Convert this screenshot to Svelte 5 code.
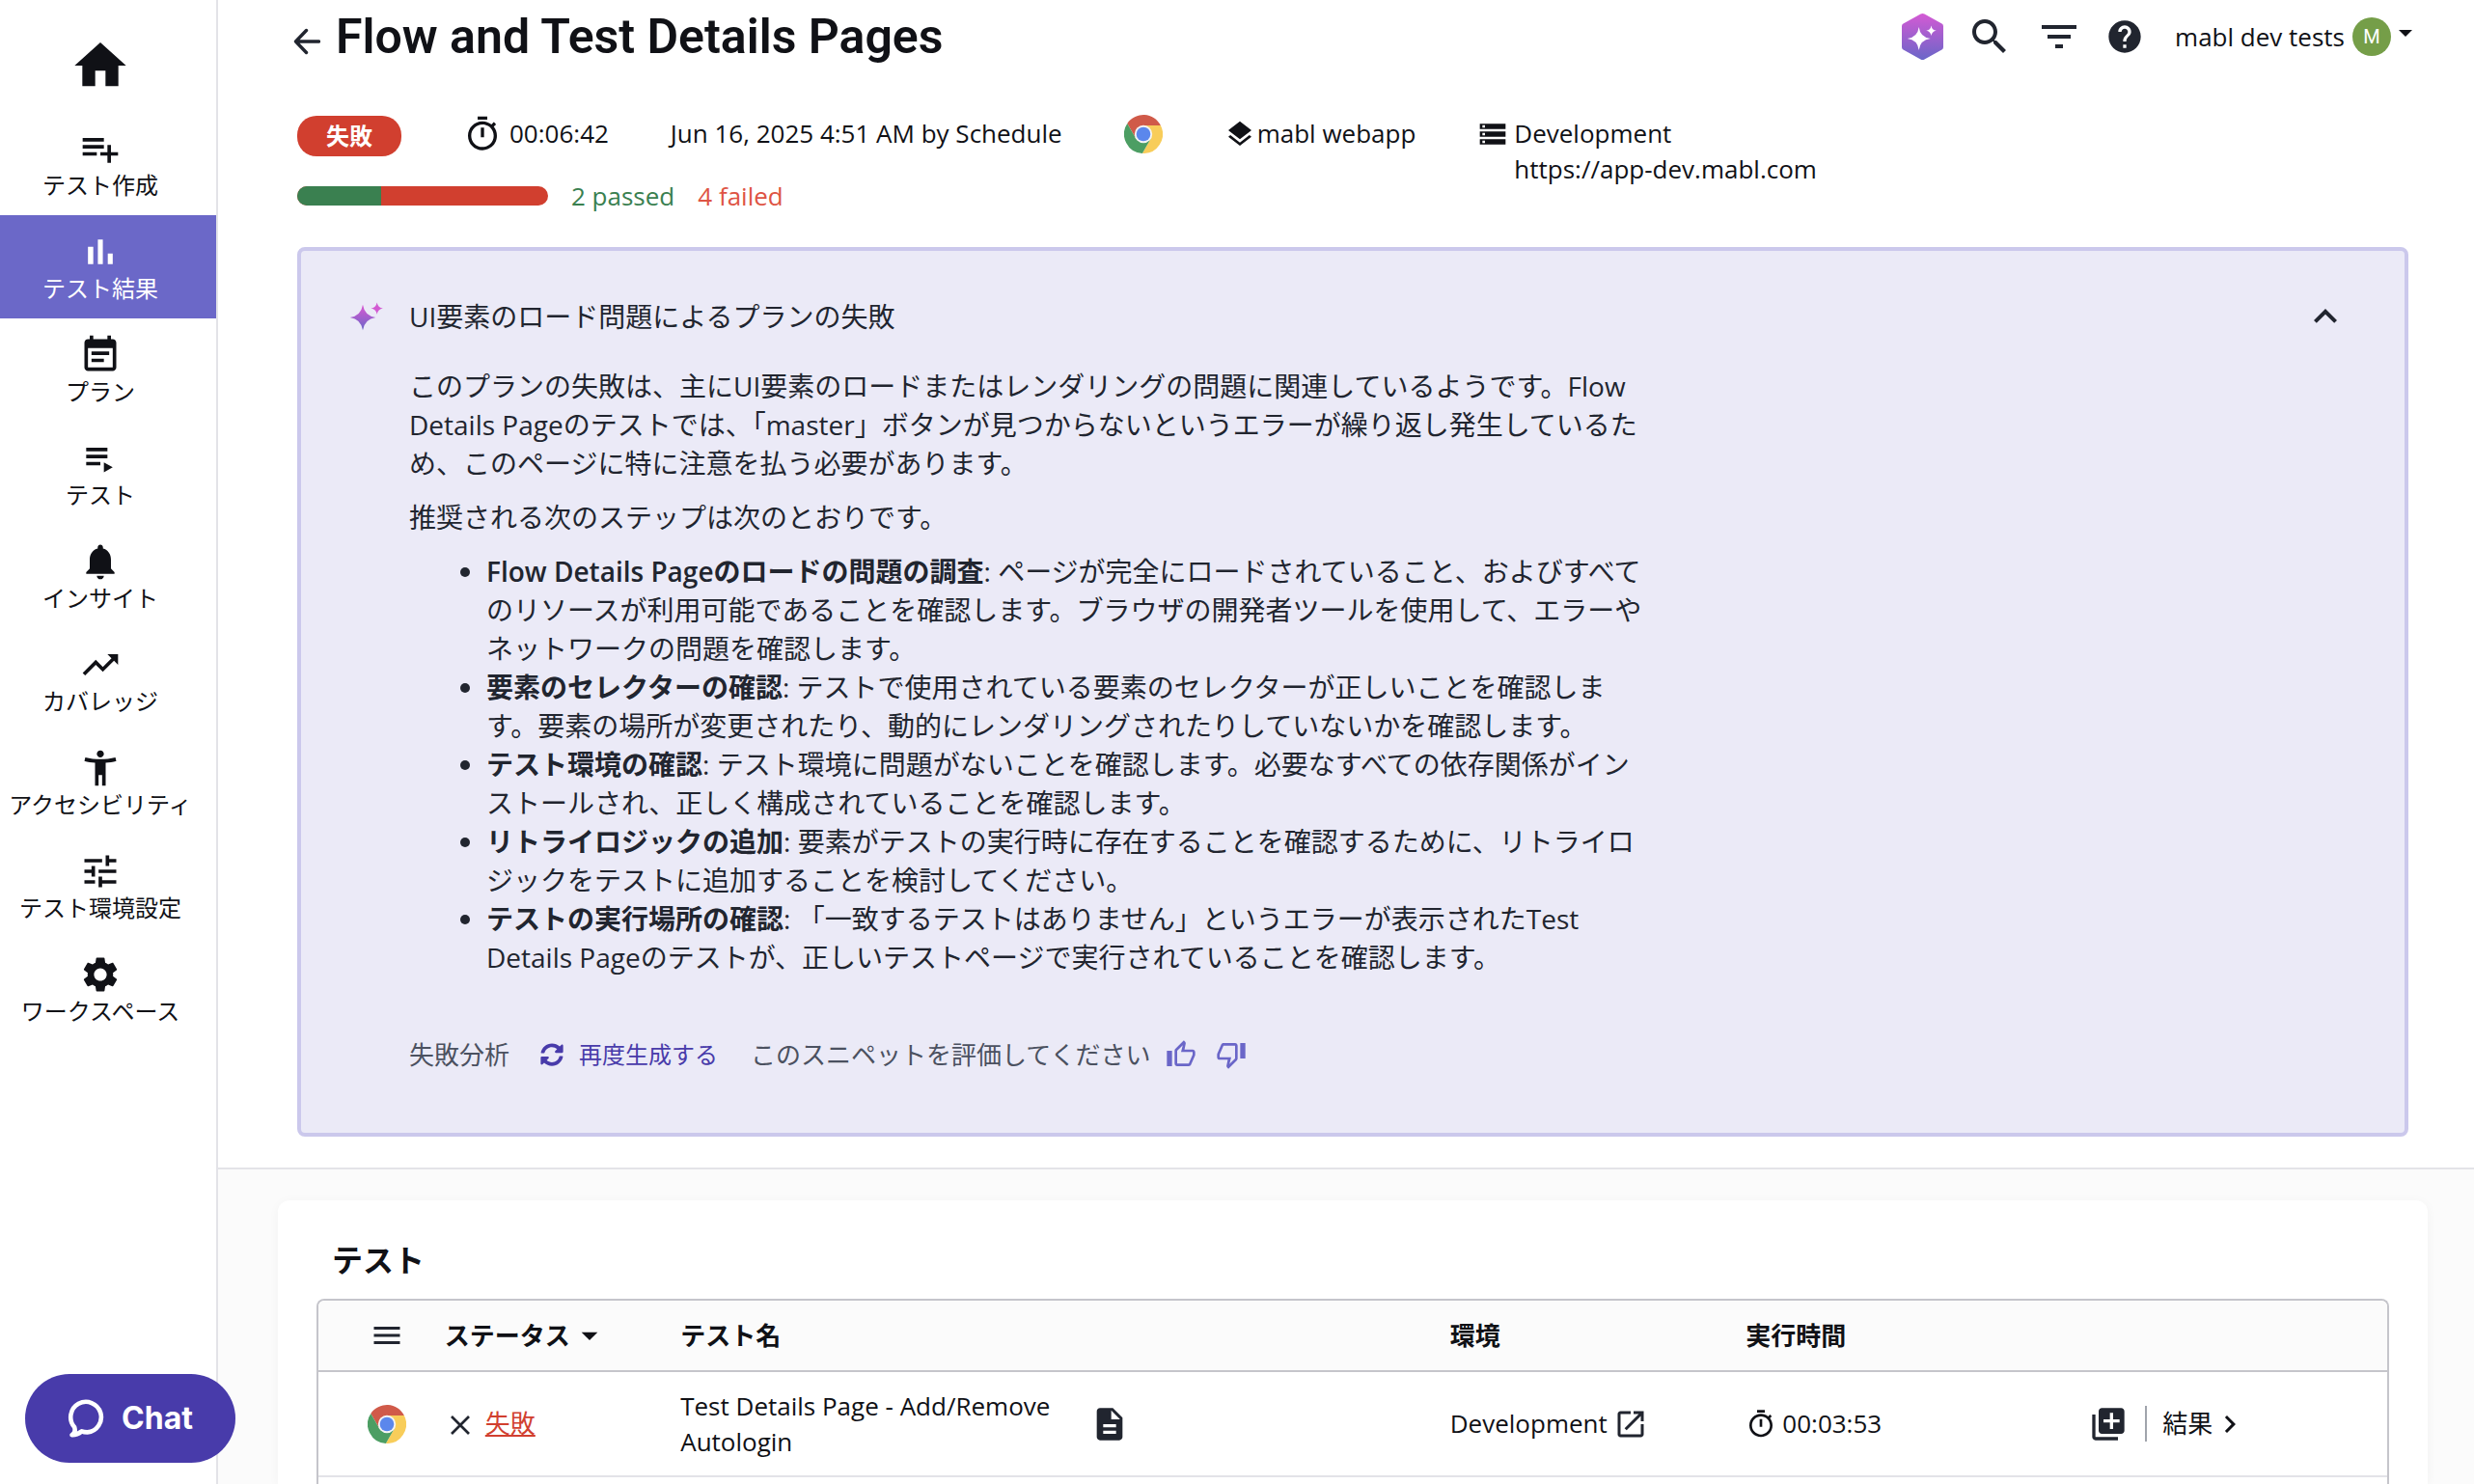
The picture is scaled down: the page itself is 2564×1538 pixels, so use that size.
<script>
  const navItems = [
    { label: 'テスト作成', icon: 'M14 10H2v2h12v-2zm0-4H2v2h12V6zm4 8v-4h-2v4h-4v2h4v4h2v-4h4v-2h-4zM2 16h8v-2H2v2z' },
    { label: 'テスト結果', active: true, icon: 'M5 9.2h3V19H5zM10.6 5h2.8v14h-2.8zm5.6 8H19v6h-2.8z' },
    { label: 'プラン', icon: 'M17 10H7v2h10v-2zm2-7h-1V1h-2v2H8V1H6v2H5c-1.11 0-1.99.9-1.99 2L3 19c0 1.1.89 2 2 2h14c1.1 0 2-.9 2-2V5c0-1.1-.9-2-2-2zm0 16H5V8h14v11zm-5-5H7v2h7v-2z' },
    { label: 'テスト', icon: 'M4 6h12v2H4zM4 10h12v2H4zM4 14h8v2H4zM14 14.3v5.6l5-2.8z' },
    { label: 'インサイト', icon: 'M12 22c1.1 0 2-.9 2-2h-4c0 1.1.89 2 2 2zm6-6v-5c0-3.07-1.64-5.64-4.5-6.32V4c0-.83-.67-1.5-1.5-1.5s-1.5.67-1.5 1.5v.68C7.63 5.36 6 7.92 6 11v5l-2 2v1h16v-1l-2-2z' },
    { label: 'カバレッジ', icon: 'M16 6l2.29 2.29-4.88 4.88-4-4L2 16.59 3.41 18l6-6 4 4 6.3-6.29L22 12V6z' },
    { label: 'アクセシビリティ', icon: 'M20.5 6c-2.61.7-5.67 1-8.5 1s-5.89-.3-8.5-1L3 8c1.86.5 4 .83 6 1v13h2v-6h2v6h2V9c2-.17 4.14-.5 6-1l-.5-2zM12 6c1.1 0 2-.9 2-2s-.9-2-2-2-2 .9-2 2 .9 2 2 2z' },
    { label: 'テスト環境設定', icon: 'M3 17v2h6v-2H3zM3 5v2h10V5H3zm10 16v-2h8v-2h-8v-2h-2v6h2zM7 9v2H3v2h4v2h2V9H7zm14 4v-2H11v2h10zm-6-4h2V7h4V5h-4V3h-2v6z' },
    { label: 'ワークスペース', icon: 'M19.14 12.94c.04-.3.06-.61.06-.94 0-.32-.02-.64-.07-.94l2.03-1.58c.18-.14.23-.41.12-.61l-1.92-3.32c-.12-.22-.37-.29-.59-.22l-2.39.96c-.5-.38-1.03-.7-1.62-.94l-.36-2.54c-.04-.24-.24-.41-.48-.41h-3.84c-.24 0-.43.17-.47.41l-.36 2.54c-.59.24-1.13.57-1.62.94l-2.39-.96c-.22-.08-.47 0-.59.22L2.74 8.87c-.12.21-.08.47.12.61l2.03 1.58c-.05.3-.09.63-.09.94s.02.64.07.94l-2.03 1.58c-.18.14-.23.41-.12.61l1.92 3.32c.12.22.37.29.59.22l2.39-.96c.5.38 1.03.7 1.62.94l.36 2.54c.05.24.24.41.48.41h3.84c.24 0 .44-.17.47-.41l.36-2.54c.59-.24 1.13-.56 1.62-.94l2.39.96c.22.08.47 0 .59-.22l1.92-3.32c.12-.22.07-.47-.12-.61l-2.01-1.58zM12 15.6c-1.98 0-3.6-1.62-3.6-3.6s1.62-3.6 3.6-3.6 3.6 1.62 3.6 3.6-1.62 3.6-3.6 3.6z' }
  ]

  const icons = {
    home: 'M10 20v-6h4v6h5v-8h3L12 3 2 12h3v8z',
    search: 'M15.5 14h-.79l-.28-.27C15.41 12.59 16 11.11 16 9.5 16 5.91 13.09 3 9.5 3S3 5.91 3 9.5 5.91 16 9.5 16c1.61 0 3.09-.59 4.23-1.57l.27.28v.79l5 4.99L20.49 19l-4.99-5zm-6 0C7.01 14 5 11.99 5 9.5S7.01 5 9.5 5 14 7.01 14 9.5 11.99 14 9.5 14z',
    filter: 'M10 18h4v-2h-4v2zM3 6v2h18V6H3zm3 7h12v-2H6v2z',
    help: 'M12 2C6.48 2 2 6.48 2 12s4.48 10 10 10 10-4.48 10-10S17.52 2 12 2zm1 17h-2v-2h2v2zm2.07-7.75l-.9.92C13.45 12.9 13 13.5 13 15h-2v-.5c0-1.1.45-2.1 1.17-2.83l1.24-1.26c.37-.36.59-.86.59-1.41 0-1.1-.9-2-2-2s-2 .9-2 2H8c0-2.21 1.79-4 4-4s4 1.79 4 4c0 .88-.36 1.68-.93 2.25z',
    timer: 'M15 1H9v2h6V1zm-4 13h2V8h-2v6zm8.03-6.61l1.42-1.42c-.43-.51-.9-.99-1.41-1.41l-1.42 1.42C16.07 4.74 14.12 4 12 4c-4.97 0-9 4.03-9 9s4.02 9 9 9 9-4.03 9-9c0-2.12-.74-4.07-1.97-5.61zM12 20c-3.87 0-7-3.13-7-7s3.13-7 7-7 7 3.13 7 7-3.13 7-7 7z',
    layers: 'M11.99 18.54l-7.37-5.73L3 14.07l9 7 9-7-1.63-1.27-7.38 5.74zM12 16l7.36-5.73L21 9l-9-7-9 7 1.63 1.27L12 16z',
    storage: 'M2 20h20v-4H2v4zm2-3h2v2H4v-2zM2 4v4h20V4H2zm4 3H4V5h2v2zm-4 7h20v-4H2v4zm2-3h2v2H4v-2z',
    up: 'M12 8l-6 6 1.41 1.41L12 10.83l4.59 4.58L18 14z',
    right: 'M10 6L8.59 7.41 13.17 12l-4.58 4.59L10 18l6-6z',
    thumbUp: 'M9 21h9c.83 0 1.54-.5 1.84-1.22l3.02-7.05c.09-.23.14-.47.14-.73v-2c0-1.1-.9-2-2-2h-6.31l.95-4.57.03-.32c0-.41-.17-.79-.44-1.06L14.17 1 7.58 7.59C7.22 7.95 7 8.45 7 9v10c0 1.1.9 2 2 2zM9 9l4.34-4.34L12 10h9v2l-3 7H9V9zM1 9h4v12H1z',
    thumbDown: 'M15 3H6c-.83 0-1.54.5-1.84 1.22l-3.02 7.05c-.09.23-.14.47-.14.73v2c0 1.1.9 2 2 2h6.31l-.95 4.57-.03.32c0 .41.17.79.44 1.06L9.83 23l6.59-6.59c.36-.36.58-.86.58-1.41V5c0-1.1-.9-2-2-2zm0 12l-4.34 4.34L12 14H3v-2l3-7h9v10zm4-12h4v12h-4z',
    menu: 'M3 18h18v-2H3v2zm0-5h18v-2H3v2zm0-7v2h18V6H3z',
    dropDown: 'M7 10l5 5 5-5z',
    doc: 'M14 2H6c-1.1 0-1.99.9-1.99 2L4 20c0 1.1.89 2 1.99 2H18c1.1 0 2-.9 2-2V8l-6-6zm2 16H8v-2h8v2zm0-4H8v-2h8v2zm-3-5V3.5L18.5 9H13z',
    open: 'M19 19H5V5h7V3H5c-1.11 0-2 .9-2 2v14c0 1.1.89 2 2 2h14c1.1 0 2-.9 2-2v-7h-2v7zM14 3v2h3.59l-9.83 9.83 1.41 1.41L19 6.41V10h2V3h-7z',
    copyAdd: 'M4 6H2v14c0 1.1.9 2 2 2h14v-2H4V6zm16-4H8c-1.1 0-2 .9-2 2v12c0 1.1.9 2 2 2h12c1.1 0 2-.9 2-2V4c0-1.1-.9-2-2-2zm-1 9h-4v4h-2v-4H9V9h4V5h2v4h4v2z'
  }

  const steps = [
    { title: 'Flow Details Pageのロードの問題の調査', text: 'ページが完全にロードされていること、およびすべてのリソースが利用可能であることを確認します。ブラウザの開発者ツールを使用して、エラーやネットワークの問題を確認します。' },
    { title: '要素のセレクターの確認', text: 'テストで使用されている要素のセレクターが正しいことを確認します。要素の場所が変更されたり、動的にレンダリングされたりしていないかを確認します。' },
    { title: 'テスト環境の確認', text: 'テスト環境に問題がないことを確認します。必要なすべての依存関係がインストールされ、正しく構成されていることを確認します。' },
    { title: 'リトライロジックの追加', text: '要素がテストの実行時に存在することを確認するために、リトライロジックをテストに追加することを検討してください。' },
    { title: 'テストの実行場所の確認', text: '「一致するテストはありません」というエラーが表示されたTest Details Pageのテストが、正しいテストページで実行されていることを確認します。' }
  ]

  const passed = 2
  const failed = 4

  let open = $state(true)
</script>

{#snippet icon(d, size)}
  <svg width={size} height={size} viewBox="0 0 24 24" aria-hidden="true"><path {d} fill="currentColor" /></svg>
{/snippet}

{#snippet chrome()}
  <svg width="40" height="40" viewBox="0 0 40 40" role="img" aria-label="Chrome">
    <path fill="#d05a49" d="M3.28 9.03A20 20 0 0 1 37.86 11L20 11 12.21 24.5z" />
    <path fill="#f8cd5a" d="M37.86 11A20 20 0 0 1 18.86 39.97L27.79 24.5 20 11z" />
    <path fill="#4c9e63" d="M18.86 39.97A20 20 0 0 1 3.28 9.03L12.21 24.5 27.79 24.5z" />
    <circle cx="20" cy="20" r="9.2" fill="#f4f4f4" />
    <circle cx="20" cy="20" r="7.3" fill="#5b87ec" />
  </svg>
{/snippet}

<div class="app">
  <aside class="sidebar">
    <a class="home" href="#home" aria-label="Home">{@render icon(icons.home, 64)}</a>
    <nav>
      {#each navItems as item}
        <a class="nav-item" class:active={item.active} href="#nav">
          {@render icon(item.icon, 44)}
          <span>{item.label}</span>
        </a>
      {/each}
    </nav>
    <button class="chat">
      <svg width="40" height="40" viewBox="0 0 40 40" aria-hidden="true">
        <path d="M4.5 37.2c3-1.6 3.8-4.6 2.6-8.2A15.8 15.8 0 1 1 20.5 34.4c-2.4 0-4.2-.3-5.8-1-3.2 2.6-6.6 4-10.2 3.8z" fill="none" stroke="currentColor" stroke-width="4.6" stroke-linejoin="round" />
      </svg>
      Chat
    </button>
  </aside>

  <main>
    <header class="overview">
      <div class="topbar">
        <button class="back" aria-label="Back">
          <svg width="28" height="38" viewBox="0 0 28 38"><path d="M26.5 24H3M13.5 12.5L2.5 24l11 11.5" fill="none" stroke="currentColor" stroke-width="3.4" stroke-linecap="round" stroke-linejoin="round" /></svg>
        </button>
        <h1>Flow and Test Details Pages</h1>
        <div class="tools">
          <button aria-label="AI">
            <svg width="43" height="48" viewBox="0 0 43 48">
              <defs>
                <linearGradient id="hex" x1="0" y1="0" x2="0" y2="1">
                  <stop offset="0" stop-color="#d45ad4" />
                  <stop offset="1" stop-color="#6a66c8" />
                </linearGradient>
              </defs>
              <path d="M19.5.6q2-1.1 4 0L41.5 10.4q1.5.9 1.5 2.6v22q0 1.7-1.5 2.6L23.5 47.4q-2 1.1-4 0L1.5 37.6Q0 36.7 0 35V13q0-1.7 1.5-2.6z" fill="url(#hex)" />
              <path d="M17.7 14q1.3 10.7 12 12-10.7 1.3-12 12-1.3-10.7-12-12 10.7-1.3 12-12zM30.5 12.4q.7 4.6 5.3 5.3-4.6.7-5.3 5.3-.7-4.6-5.3-5.3 4.6-.7 5.3-5.3z" fill="#fff" />
            </svg>
          </button>
          <button aria-label="Search">{@render icon(icons.search, 48)}</button>
          <button aria-label="Filter">{@render icon(icons.filter, 48)}</button>
          <button aria-label="Help">{@render icon(icons.help, 40)}</button>
          <button class="account">
            mabl dev tests
            <span class="avatar">M</span>
            <svg width="14" height="14" viewBox="0 0 14 14"><path d="M0 0h14L7 7z" fill="currentColor" /></svg>
          </button>
        </div>
      </div>

      <div class="summary">
        <div class="run">
          <div class="facts">
            <span class="badge">失敗</span>
            <span class="fact wide">{@render icon(icons.timer, 40)}00:06:42</span>
            <span class="fact">Jun 16, 2025 4:51 AM by Schedule</span>
            <span class="fact">{@render chrome()}</span>
            <span class="fact">{@render icon(icons.layers, 32)}mabl webapp</span>
          </div>
          <div class="progress">
            <div class="bar"><div class="bar-passed" style="width: {100 * passed / (passed + failed)}%"></div></div>
            <span class="passed">{passed} passed</span>
            <span class="failed">{failed} failed</span>
          </div>
        </div>
        <div class="env">
          {@render icon(icons.storage, 32)}
          <div>Development<br />https://app-dev.mabl.com</div>
        </div>
      </div>

      <section class="analysis">
        <div class="analysis-head">
          <svg width="40" height="40" viewBox="0 0 40 40" aria-hidden="true">
            <defs>
              <linearGradient id="spark" x1="0" y1="0" x2="0" y2="1">
                <stop offset="0" stop-color="#dc58d2" />
                <stop offset="1" stop-color="#6a66c8" />
              </linearGradient>
            </defs>
            <path d="M16 7.7q1.8 11.5 13.3 13.3-11.5 1.8-13.3 13.3-1.8-11.5-13.3-13.3 11.5-1.8 13.3-13.3z" fill="url(#spark)" />
            <path d="M30.7 5.4q1 5.2 6.2 6.2-5.2 1-6.2 6.2-1-5.2-6.2-6.2 5.2-1 6.2-6.2z" fill="#d25ad2" />
          </svg>
          <h2>UI要素のロード問題によるプランの失敗</h2>
          <button aria-label="Toggle" aria-expanded={open} onclick={() => (open = !open)}>{@render icon(icons.up, 48)}</button>
        </div>
        {#if open}
          <div class="analysis-body">
            <p>このプランの失敗は、主にUI要素のロードまたはレンダリングの問題に関連しているようです。Flow Details Pageのテストでは、「master」ボタンが見つからないというエラーが繰り返し発生しているため、このページに特に注意を払う必要があります。</p>
            <p>推奨される次のステップは次のとおりです。</p>
            <ul>
              {#each steps as step}
                <li><strong>{step.title}</strong>: {step.text}</li>
              {/each}
            </ul>
          </div>
          <div class="analysis-foot">
            <span>失敗分析</span>
            <button class="regenerate">
              <svg width="24" height="24" viewBox="0 0 512 512" aria-hidden="true"><path fill="currentColor" d="M370.72 133.28C339.458 104.008 298.888 87.962 255.848 88c-77.458.068-144.328 53.178-162.791 126.85-1.344 5.363-6.122 9.15-11.651 9.15H24.103c-7.498 0-13.194-6.807-11.807-14.176C33.933 94.924 134.813 8 256 8c66.448 0 126.791 26.136 171.315 68.685L463.03 40.97C478.149 25.851 504 36.559 504 57.941V192c0 13.255-10.745 24-24 24H345.941c-21.382 0-32.09-25.851-16.971-40.971l41.75-41.749zM32 296h134.059c21.382 0 32.09 25.851 16.971 40.971l-41.75 41.75c31.262 29.273 71.835 45.319 114.876 45.28 77.418-.07 144.315-53.144 162.787-126.849 1.344-5.363 6.122-9.15 11.651-9.15h57.304c7.498 0 13.194 6.807 11.807 14.176C478.067 417.076 377.187 504 256 504c-66.448 0-126.791-26.136-171.315-68.685L48.97 471.03C33.851 486.149 8 475.441 8 454.059V320c0-13.255 10.745-24 24-24z" /></svg>
              再度生成する
            </button>
            <span>このスニペットを評価してください</span>
            <div class="votes">
              <button aria-label="Good">{@render icon(icons.thumbUp, 32)}</button>
              <button aria-label="Bad">{@render icon(icons.thumbDown, 32)}</button>
            </div>
          </div>
        {/if}
      </section>
    </header>

    <div class="results">
      <section class="card">
        <h3>テスト</h3>
        <div class="table-wrap">
          <table>
            <colgroup>
              <col class="c-browser" /><col class="c-status" /><col class="c-name" /><col class="c-doc" /><col class="c-env" /><col class="c-time" /><col />
            </colgroup>
            <thead>
              <tr>
                <th class="center"><button aria-label="Columns">{@render icon(icons.menu, 36)}</button></th>
                <th><button class="sort">ステータス{@render icon(icons.dropDown, 40)}</button></th>
                <th>テスト名</th>
                <th></th>
                <th>環境</th>
                <th>実行時間</th>
                <th></th>
              </tr>
            </thead>
            <tbody>
              <tr>
                <td class="center">{@render chrome()}</td>
                <td>
                  <div class="cell status">
                    <svg width="28" height="28" viewBox="0 0 28 28" aria-hidden="true"><path d="M5 6l18 18M23 6L5 24" stroke="currentColor" stroke-width="2.7" /></svg>
                    <a class="fail-link" href="#failure">失敗</a>
                  </div>
                </td>
                <td>Test Details Page - Add/Remove Autologin</td>
                <td><button aria-label="Logs">{@render icon(icons.doc, 40)}</button></td>
                <td><div class="cell">Development <button aria-label="Open">{@render icon(icons.open, 36)}</button></div></td>
                <td><div class="cell">{@render icon(icons.timer, 32)}00:03:53</div></td>
                <td>
                  <div class="cell">
                    <button aria-label="Add">{@render icon(icons.copyAdd, 40)}</button>
                    <a class="result-link" href="#result">結果{@render icon(icons.right, 36)}</a>
                  </div>
                </td>
              </tr>
            </tbody>
          </table>
        </div>
      </section>
    </div>
  </main>
</div>

<style>
  :global(body) {
    margin: 0;
  }

  .app {
    display: flex;
    height: 100vh;
    overflow: hidden;
    background: #fff;
    color: #101116;
    font: 26px/37px 'Open Sans', 'Noto Sans CJK JP', sans-serif;
  }

  svg {
    display: block;
    flex: none;
  }

  button {
    display: block;
    margin: 0;
    padding: 0;
    border: 0;
    background: none;
    color: #21252f;
    font: inherit;
    cursor: pointer;
  }

  a {
    color: inherit;
    text-decoration: none;
  }

  h1, h2, h3, p, ul {
    margin: 0;
  }

  .sidebar {
    flex: none;
    width: 224px;
    border-right: 2px solid #e3e3e8;
  }

  .home {
    display: flex;
    justify-content: center;
    padding: 36px 16px 16px 0;
  }

  .nav-item {
    display: flex;
    flex-direction: column;
    align-items: center;
    padding: 16px 16px 16px 0;
    font-size: 24px;
    line-height: 31px;
    white-space: nowrap;
  }

  .nav-item.active {
    background: #6b68c8;
    color: #fff;
  }

  /* floats over the sidebar edge */
  .chat {
    position: fixed;
    left: 26px;
    bottom: 22px;
    display: flex;
    align-items: center;
    justify-content: center;
    gap: 16px;
    width: 218px;
    height: 92px;
    border-radius: 46px;
    background: #483baa;
    color: #fff;
    font: 700 32px/40px Inter, sans-serif;
  }

  main {
    flex: 1;
    min-width: 0;
    display: flex;
    flex-direction: column;
  }

  .overview {
    padding: 0 68px 32px 82px;
    border-bottom: 2px solid #e3e3e8;
  }

  .topbar {
    display: flex;
    align-items: center;
    height: 76px;
    margin: 0 -4px;
  }

  h1 {
    margin-left: 16px;
    font: 600 50px/60px Roboto, sans-serif;
  }

  .tools {
    display: flex;
    align-items: center;
    gap: 24px;
    margin-left: auto;
  }

  .account {
    display: flex;
    align-items: center;
    gap: 8px;
    margin-left: 8px;
    color: #101116;
  }

  .avatar {
    width: 40px;
    border-radius: 50%;
    background: #759e48;
    color: #fff;
    font: 20px/40px Roboto, sans-serif;
  }

  .summary {
    display: flex;
    gap: 64px;
    margin-top: 44px;
  }

  .facts {
    display: flex;
    align-items: flex-start;
    gap: 64px;
  }

  .badge {
    width: 108px;
    border-radius: 20px;
    background: #d13f2f;
    color: #fff;
    font-size: 24px;
    font-weight: 700;
    line-height: 42px;
    text-align: center;
  }

  .fact {
    display: flex;
    align-items: center;
    gap: 2px;
    height: 37px;
  }

  .fact.wide {
    gap: 8px;
  }

  .progress {
    display: flex;
    align-items: center;
    gap: 24px;
    height: 20px;
    margin-top: 31px;
    font-weight: 500;
  }

  .bar {
    width: 260px;
    height: 20px;
    overflow: hidden;
    border-radius: 10px;
    background: #d13f2f;
  }

  .bar-passed {
    height: 100%;
    background: #3a8050;
  }

  .passed {
    color: #3a8050;
  }

  .failed {
    color: #de5444;
  }

  .env {
    display: flex;
    gap: 6px;
  }

  .env svg {
    margin-top: 3px;
  }

  .analysis {
    margin-top: 43px;
    padding: 44px 58px 65px 48px;
    border: 4px solid #cbc8ec;
    border-radius: 8px;
    background: #ebeaf7;
    color: #21252f;
    font-size: 28px;
    line-height: 40px;
  }

  .analysis-head {
    display: flex;
    align-items: center;
    gap: 24px;
  }

  h2 {
    flex: 1;
    font: inherit;
  }

  .analysis-body {
    max-width: 1286px;
    margin: 28px 0 65px 64px;
  }

  p {
    margin-bottom: 16px;
  }

  ul {
    padding-left: 80px;
  }

  strong {
    font-weight: 600;
  }

  .analysis-foot {
    display: flex;
    align-items: center;
    height: 32px;
    margin-left: 64px;
    color: #4b5160;
    font-size: 26px;
  }

  .regenerate {
    display: flex;
    align-items: center;
    gap: 16px;
    margin: 0 34px 0 32px;
    color: #483baa;
    font-size: 24px;
  }

  .votes {
    display: flex;
    gap: 20px;
    margin-left: 16px;
  }

  .votes button {
    color: #6a66c8;
  }

  .results {
    flex: 1;
    display: flex;
    padding: 32px 48px 0 62px;
    background: #fbfbfb;
  }

  .card {
    flex: 1;
    display: flex;
    flex-direction: column;
    padding: 40px 40px 0;
    border-radius: 12px 12px 0 0;
    background: #fff;
    box-shadow: 0 2px 12px rgba(0, 0, 0, 0.04);
  }

  h3 {
    margin: 0 0 18px 16px;
    font-size: 32px;
    line-height: 44px;
  }

  .table-wrap {
    flex: 1;
    overflow: hidden;
    border: 2px solid #c5c5cb;
    border-bottom: 0;
    border-radius: 8px 8px 0 0;
  }

  table {
    width: 100%;
    table-layout: fixed;
    border-collapse: separate;
    border-spacing: 0;
  }

  .c-browser { width: 6.1%; }
  .c-status { width: 11.4%; }
  .c-name { width: 19.8%; }
  .c-doc { width: 17.4%; }
  .c-env { width: 14.3%; }
  .c-time { width: 16.6%; }

  th, td {
    padding: 0;
    text-align: left;
  }

  th {
    height: 72px;
    border-bottom: 2px solid #c5c5cb;
    background: #fbfbfb;
    font-weight: 700;
  }

  td {
    height: 107px;
    border-bottom: 2px solid #e3e3e8;
  }

  .center {
    padding-left: 12px;
  }

  .center svg,
  .center button {
    margin: 0 auto;
  }

  .sort {
    display: flex;
    align-items: center;
    color: inherit;
  }

  .cell {
    display: flex;
    align-items: center;
    gap: 6px;
  }

  .status {
    gap: 12px;
    padding-left: 2px;
    color: #21252f;
  }

  .fail-link {
    color: #d13f2f;
    text-decoration: underline;
  }

  .result-link {
    display: flex;
    align-items: center;
    margin-left: 12px;
    padding-left: 16px;
    border-left: 2px solid #a0a4ac;
  }
</style>
